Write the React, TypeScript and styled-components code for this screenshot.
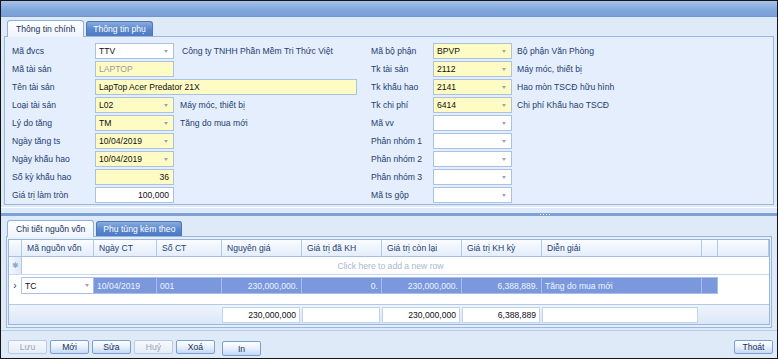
import React from "react";
import styled, { createGlobalStyle } from "styled-components";

const Global = createGlobalStyle`
  html, body { margin: 0; padding: 0; background: #dfe9f7; }
  body { font-family: "Liberation Sans", Arial, sans-serif; font-size: 8.6px; color: #1f3d70; }
  * { box-sizing: border-box; }
`;

const Window = styled.div`
  width: 778px;
  height: 359px;
  border: 1px solid #151515;
  background: #dfeaf8;
  display: flex;
  flex-direction: column;
  overflow: hidden;
`;

const Band = styled.div`
  height: 16px;
  flex: none;
  background: linear-gradient(#a8c3ea, #80a6dc 60%, #7aa0d8);
  border-bottom: 1px solid #6e96cf;
`;

const TabStrip = styled.div<{ $h: number }>`
  height: ${(p) => p.$h}px;
  flex: none;
  display: flex;
  align-items: flex-end;
  gap: 2px;
  padding-left: 6px;
`;

const Tab = styled.div<{ $active?: boolean }>`
  height: ${(p) => (p.$active ? 17 : 15)}px;
  padding: 0 ${(p) => (p.$active ? 8 : 6)}px;
  display: flex;
  align-items: center;
  border: 1px solid ${(p) => (p.$active ? "#8fb0dc" : "#4b76bb")};
  border-bottom: none;
  border-radius: 3px 3px 0 0;
  background: ${(p) =>
    p.$active
      ? "linear-gradient(#ffffff, #eef4fd)"
      : "linear-gradient(#89ace0, #5a86cb 55%, #4c7bc4)"};
  color: ${(p) => (p.$active ? "#1b3158" : "#ffffff")};
  margin-bottom: ${(p) => (p.$active ? -1 : 0)}px;
  position: relative;
  z-index: ${(p) => (p.$active ? 2 : 1)};
`;

const Panel = styled.div`
  height: 169px;
  flex: none;
  margin: 0 3px;
  border: 1px solid #99b7df;
  background: #e4eefc;
  padding: 6px 0 0 7px;
  display: flex;
`;

const Column = styled.div<{ $w?: number }>`
  width: ${(p) => (p.$w ? `${p.$w}px` : "auto")};
  flex: ${(p) => (p.$w ? "none" : "1")};
  display: flex;
  flex-direction: column;
  gap: 2px;
`;

const Row = styled.div`
  height: 16px;
  display: flex;
  align-items: center;
`;

const Label = styled.div<{ $w: number }>`
  width: ${(p) => p.$w}px;
  flex: none;
  color: #1f3d70;
  white-space: nowrap;
`;

const Field = styled.div<{ $w?: number; $yellow?: boolean; $right?: boolean; $muted?: boolean }>`
  width: ${(p) => p.$w ?? 79}px;
  height: 16px;
  flex: none;
  border: 1px solid #a9c2e4;
  background: ${(p) => (p.$yellow ? "#fffbc4" : "#ffffff")};
  color: ${(p) => (p.$muted ? "#9a9a9a" : "#111")};
  padding: 0 4px 0 3px;
  display: flex;
  align-items: center;
  justify-content: ${(p) => (p.$right ? "flex-end" : "flex-start")};
  white-space: nowrap;
`;

const Arrow = styled.span`
  margin-left: auto;
  margin-right: 1px;
  width: 0;
  height: 0;
  border-left: 2.5px solid transparent;
  border-right: 2.5px solid transparent;
  border-top: 3px solid #9aa6b8;
`;

const Desc = styled.div<{ $gap?: number }>`
  margin-left: ${(p) => p.$gap ?? 6}px;
  color: #1f3d70;
  white-space: nowrap;
`;

const Splitter = styled.div`
  height: 13px;
  flex: none;
  display: flex;
  flex-direction: column;
`;

const SplitLine = styled.div`
  height: 1px;
  margin-top: 2px;
  background: #b8cdea;
  border-bottom: 1px solid #ffffff;
`;

const SplitBar = styled.div`
  margin-top: 5px;
  height: 3px;
  background: #7ea2d6;
  display: flex;
  justify-content: flex-end;
  align-items: center;
  padding-right: 225px;
`;

const Grip = styled.span`
  width: 12px;
  height: 1px;
  background: repeating-linear-gradient(90deg, #ffffff 0 1px, transparent 1px 3px);
`;

const GridBox = styled.div`
  height: 92px;
  flex: none;
  margin: 0 5px;
  border: 1px solid #9ab6de;
  padding: 2px 1px 2px 1px;
  background: #e6effb;
  display: flex;
`;

const Grid = styled.div`
  flex: 1;
  border: 1px solid #9ab6de;
  background: #ffffff;
  display: flex;
  flex-direction: column;
`;

const cols = "13px 72px 63px 65px 80px 80px 80px 80px 160px 16px 1fr";

const HeadRow = styled.div`
  display: grid;
  grid-template-columns: ${cols};
  height: 17px;
  background: linear-gradient(#fafcff, #e3edfa);
  border-bottom: 1px solid #a6c0e3;
`;

const HeadCell = styled.div`
  border-right: 1px solid #b3c9e8;
  display: flex;
  align-items: center;
  padding-left: 5px;
  color: #1f3d70;
  white-space: nowrap;
`;

const NewRow = styled.div`
  display: grid;
  grid-template-columns: 13px 1fr;
  height: 18px;
  border-bottom: 1px solid #c9d8ee;
`;

const Indicator = styled.div<{ $bg?: string }>`
  background: ${(p) => p.$bg ?? "linear-gradient(90deg,#f4f8fe,#dde8f7)"};
  border-right: 1px solid #b3c9e8;
  display: flex;
  align-items: center;
  justify-content: center;
  color: #8ea8cf;
  font-size: 8px;
`;

const Hint = styled.div`
  display: flex;
  align-items: center;
  justify-content: center;
  color: #a9b8d2;
  padding-right: 10px;
`;

const DataRow = styled.div`
  display: grid;
  grid-template-columns: ${cols};
  height: 17px;
  margin-top: 2px;
`;

const Cell = styled.div<{ $right?: boolean; $edit?: boolean; $blank?: boolean }>`
  background: ${(p) => (p.$blank ? "#ffffff" : p.$edit ? "#ffffff" : "#7b98dd")};
  color: ${(p) => (p.$edit ? "#111" : "#eef3ff")};
  border-right: 1px solid ${(p) => (p.$blank ? "transparent" : "#a9bfea")};
  border-top: 1px solid ${(p) => (p.$blank ? "transparent" : "#a9bfea")};
  border-bottom: 1px solid ${(p) => (p.$blank ? "transparent" : "#a9bfea")};
  display: flex;
  align-items: center;
  justify-content: ${(p) => (p.$right ? "flex-end" : "flex-start")};
  padding: 0 3px;
  white-space: nowrap;
  overflow: hidden;
`;

const Spacer = styled.div`
  flex: 1;
`;

const FootRow = styled.div`
  display: grid;
  grid-template-columns: 13px 72px 63px 65px 80px 80px 80px 80px 158px 1fr;
  height: 20px;
  background: linear-gradient(#eef4fd, #dbe7f7);
  border-top: 1px solid #b3c9e8;
  padding: 2px 0 1px;
`;

const FootBox = styled.div<{ $empty?: boolean }>`
  background: ${(p) => (p.$empty ? "transparent" : "#ffffff")};
  border: ${(p) => (p.$empty ? "none" : "1px solid #c2d4ec")};
  margin-right: ${(p) => (p.$empty ? 0 : 2)}px;
  display: flex;
  align-items: center;
  justify-content: flex-end;
  padding-right: 3px;
  color: #111;
`;

const Bar = styled.div`
  flex: 1;
  border-top: 1px solid #b6cbe8;
  margin-top: 2px;
  padding: 9px 4px 0 7px;
  display: flex;
  align-items: flex-start;
  gap: 3px;
`;

const Button = styled.button<{ $disabled?: boolean; $push?: boolean; $gapL?: number; $tall?: boolean }>`
  width: 39px;
  height: ${(p) => (p.$tall ? 15 : 14)}px;
  margin-top: ${(p) => (p.$tall ? 1 : 0)}px;
  margin-left: ${(p) => (p.$push ? "auto" : p.$gapL ? `${p.$gapL}px` : "0")};
  padding: 0;
  font: inherit;
  border: 1px solid ${(p) => (p.$disabled ? "#b9cbe3" : "#7c9fd2")};
  border-radius: 2px;
  background: ${(p) =>
    p.$disabled
      ? "linear-gradient(#f7f9fc, #e6edf6)"
      : "linear-gradient(#ffffff, #e7f0fc 50%, #c5d9f4)"};
  color: ${(p) => (p.$disabled ? "#9aa6b6" : "#15305e")};
  display: flex;
  align-items: center;
  justify-content: center;
`;

const leftRows = [
  { l: "Mã đvcs", v: "TTV", arrow: true, d: "Công ty TNHH Phần Mềm Tri Thức Việt", gap: 8 },
  { l: "Mã tài sản", v: "LAPTOP", yellow: true, muted: true },
  { l: "Tên tài sản", v: "LapTop Acer Predator 21X", yellow: true, w: 262 },
  { l: "Loại tài sản", v: "L02", yellow: true, arrow: true, d: "Máy móc, thiết bị" },
  { l: "Lý do tăng", v: "TM", yellow: true, arrow: true, d: "Tăng do mua mới" },
  { l: "Ngày tăng ts", v: "10/04/2019", yellow: true, arrow: true },
  { l: "Ngày khấu hao", v: "10/04/2019", yellow: true, arrow: true },
  { l: "Số kỳ khấu hao", v: "36", yellow: true, right: true },
  { l: "Giá trị làm tròn", v: "100,000", right: true },
];

const rightRows = [
  { l: "Mã bộ phận", v: "BPVP", yellow: true, d: "Bộ phận Văn Phòng" },
  { l: "Tk tài sản", v: "2112", yellow: true, d: "Máy móc, thiết bị" },
  { l: "Tk khấu hao", v: "2141", yellow: true, d: "Hao mòn TSCĐ hữu hình" },
  { l: "Tk chi phí", v: "6414", yellow: true, d: "Chi phí Khấu hao TSCĐ" },
  { l: "Mã vv", v: "" },
  { l: "Phân nhóm 1", v: "" },
  { l: "Phân nhóm 2", v: "" },
  { l: "Phân nhóm 3", v: "" },
  { l: "Mã ts gộp", v: "" },
];

const heads = [
  "",
  "Mã nguồn vốn",
  "Ngày CT",
  "Số CT",
  "Nguyên giá",
  "Giá trị đã KH",
  "Giá trị còn lại",
  "Giá trị KH kỳ",
  "Diễn giải",
  "",
  "",
];

export default function App() {
  return (
    <>
      <Global />
      <Window>
        <Band />
        <TabStrip $h={19}>
          <Tab $active>Thông tin chính</Tab>
          <Tab>Thông tin phụ</Tab>
        </TabStrip>
        <Panel>
          <Column $w={359}>
            {leftRows.map((r) => (
              <Row key={r.l}>
                <Label $w={83}>{r.l}</Label>
                <Field $w={r.w} $yellow={r.yellow} $right={r.right} $muted={r.muted}>
                  {r.v}
                  {r.arrow && <Arrow />}
                </Field>
                {r.d && <Desc $gap={r.gap}>{r.d}</Desc>}
              </Row>
            ))}
          </Column>
          <Column>
            {rightRows.map((r) => (
              <Row key={r.l}>
                <Label $w={62}>{r.l}</Label>
                <Field $yellow={r.yellow}>
                  {r.v}
                  <Arrow />
                </Field>
                {r.d && <Desc $gap={5}>{r.d}</Desc>}
              </Row>
            ))}
          </Column>
        </Panel>
        <Splitter>
          <SplitLine />
          <SplitBar>
            <Grip />
          </SplitBar>
        </Splitter>
        <TabStrip $h={18}>
          <Tab $active>Chi tiết nguồn vốn</Tab>
          <Tab>Phụ tùng kèm theo</Tab>
        </TabStrip>
        <GridBox>
          <Grid>
            <HeadRow>
              {heads.map((h, i) => (
                <HeadCell key={i}>{h}</HeadCell>
              ))}
            </HeadRow>
            <NewRow>
              <Indicator>✱</Indicator>
              <Hint>Click here to add a new row</Hint>
            </NewRow>
            <DataRow>
              <Indicator $bg="#ffffff" style={{ color: "#1f3d70", fontSize: 10 }}>›</Indicator>
              <Cell $edit>
                TC
                <Arrow />
              </Cell>
              <Cell>10/04/2019</Cell>
              <Cell>001</Cell>
              <Cell $right>230,000,000.</Cell>
              <Cell $right>0.</Cell>
              <Cell $right>230,000,000.</Cell>
              <Cell $right>6,388,889.</Cell>
              <Cell>Tăng do mua mới</Cell>
              <Cell />
              <Cell $blank />
            </DataRow>
            <Spacer />
            <FootRow>
              <FootBox $empty />
              <FootBox $empty />
              <FootBox $empty />
              <FootBox $empty />
              <FootBox>230,000,000</FootBox>
              <FootBox />
              <FootBox>230,000,000</FootBox>
              <FootBox>6,388,889</FootBox>
              <FootBox />
              <FootBox $empty />
            </FootRow>
          </Grid>
        </GridBox>
        <Bar>
          <Button $disabled>Lưu</Button>
          <Button>Mới</Button>
          <Button>Sửa</Button>
          <Button $disabled>Huỷ</Button>
          <Button>Xoá</Button>
          <Button $gapL={4} $tall>In</Button>
          <Button $push>Thoát</Button>
        </Bar>
      </Window>
    </>
  );
}
